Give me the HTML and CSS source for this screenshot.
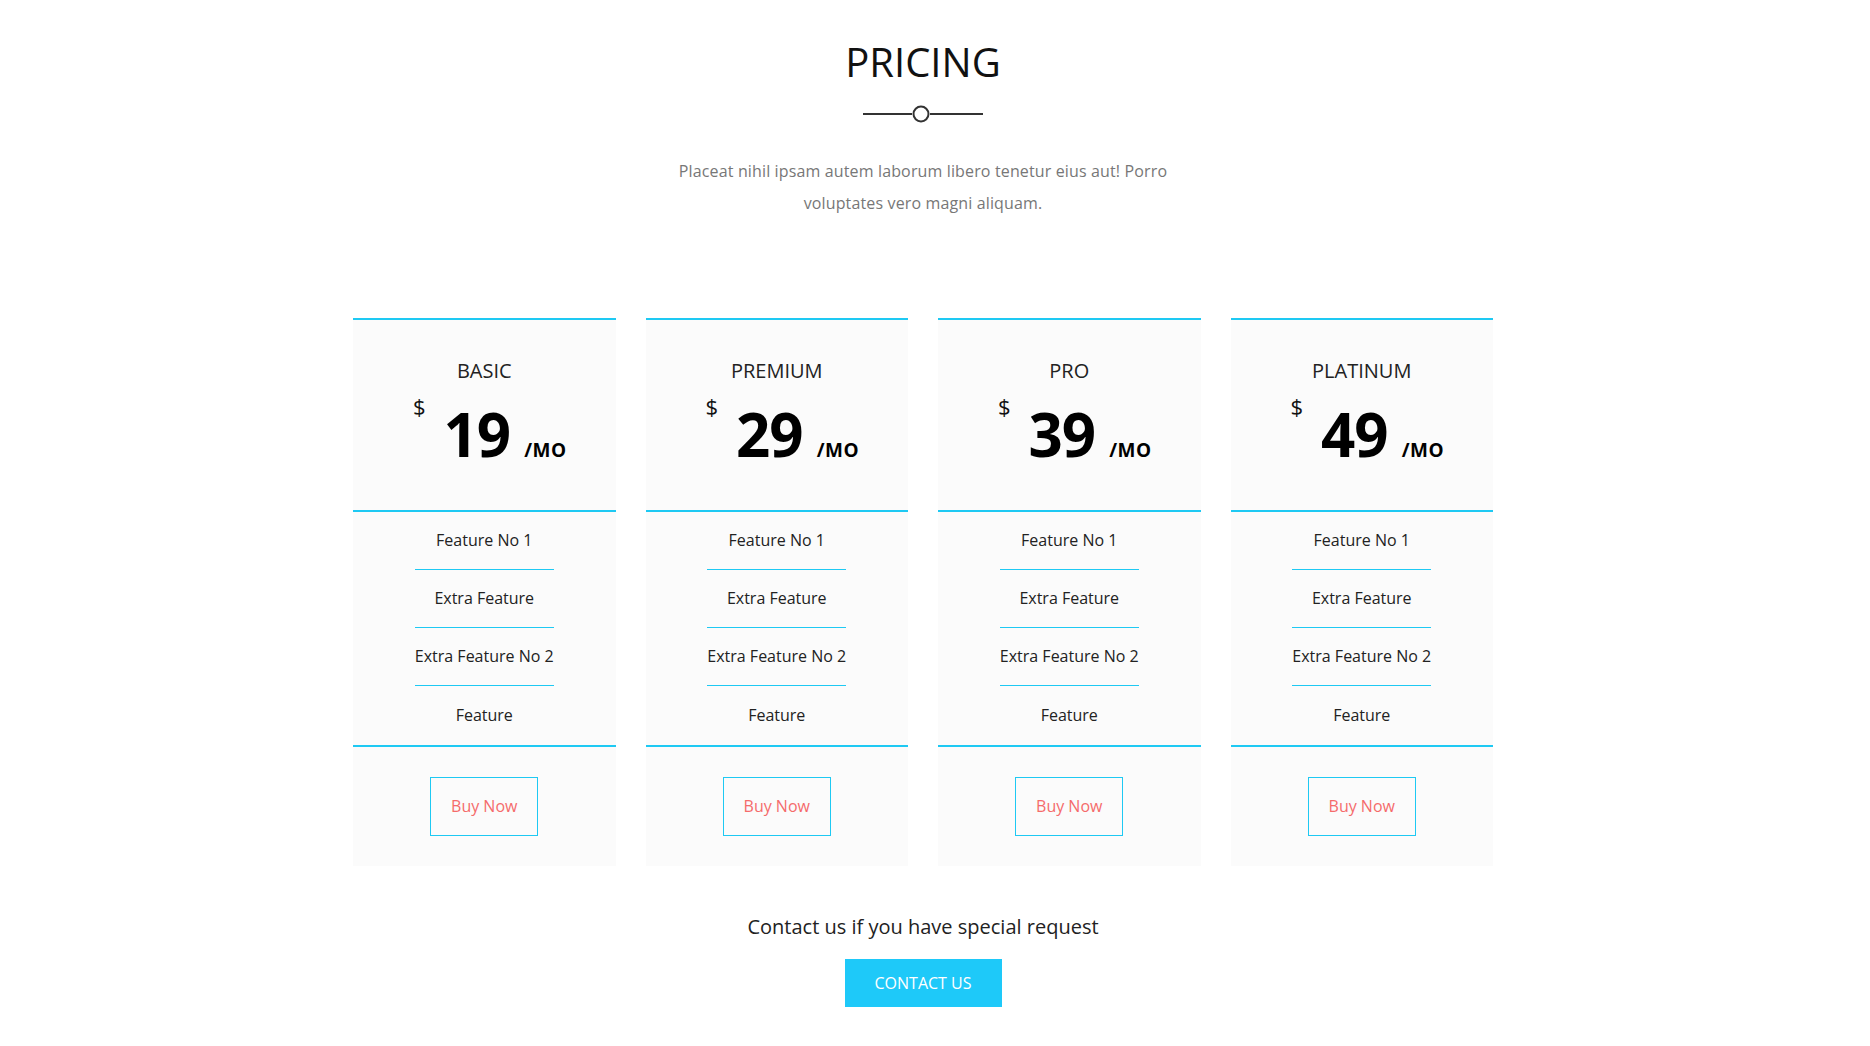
FILE: index.html
```html
<!DOCTYPE html>
<html>
<head>
<meta charset="utf-8">
<link rel="stylesheet" href="styles.css">
</head>
<body>
<section class="pricing">
  <h2 class="title">PRICING</h2>
  <div class="divider">
    <svg width="124" height="20" viewBox="0 0 124 20">
      <line x1="2" y1="10" x2="51" y2="10" stroke="#333" stroke-width="2"/>
      <circle cx="60" cy="10" r="7.5" fill="#fff" stroke="#333" stroke-width="2"/>
      <line x1="69" y1="10" x2="122" y2="10" stroke="#333" stroke-width="2"/>
    </svg>
  </div>
  <p class="lead">Placeat nihil ipsam autem laborum libero tenetur eius aut! Porro voluptates vero magni aliquam.</p>

  <div class="plans">
    <div class="plan">
      <div class="plan-head">
        <h3 class="plan-name">BASIC</h3>
        <div class="price"><span class="cur">$</span><span class="amount">19</span><span class="per">/MO</span></div>
      </div>
      <div class="plan-body">
        <ul class="features">
          <li>Feature No 1</li>
          <li>Extra Feature</li>
          <li>Extra Feature No 2</li>
          <li>Feature</li>
        </ul>
      </div>
      <div class="plan-foot"><a class="buy">Buy Now</a></div>
    </div>
    <div class="plan">
      <div class="plan-head">
        <h3 class="plan-name">PREMIUM</h3>
        <div class="price"><span class="cur">$</span><span class="amount">29</span><span class="per">/MO</span></div>
      </div>
      <div class="plan-body">
        <ul class="features">
          <li>Feature No 1</li>
          <li>Extra Feature</li>
          <li>Extra Feature No 2</li>
          <li>Feature</li>
        </ul>
      </div>
      <div class="plan-foot"><a class="buy">Buy Now</a></div>
    </div>
    <div class="plan">
      <div class="plan-head">
        <h3 class="plan-name">PRO</h3>
        <div class="price"><span class="cur">$</span><span class="amount">39</span><span class="per">/MO</span></div>
      </div>
      <div class="plan-body">
        <ul class="features">
          <li>Feature No 1</li>
          <li>Extra Feature</li>
          <li>Extra Feature No 2</li>
          <li>Feature</li>
        </ul>
      </div>
      <div class="plan-foot"><a class="buy">Buy Now</a></div>
    </div>
    <div class="plan">
      <div class="plan-head">
        <h3 class="plan-name">PLATINUM</h3>
        <div class="price"><span class="cur">$</span><span class="amount">49</span><span class="per">/MO</span></div>
      </div>
      <div class="plan-body">
        <ul class="features">
          <li>Feature No 1</li>
          <li>Extra Feature</li>
          <li>Extra Feature No 2</li>
          <li>Feature</li>
        </ul>
      </div>
      <div class="plan-foot"><a class="buy">Buy Now</a></div>
    </div>
  </div>

  <p class="contact-text">Contact us if you have special request</p>
  <a class="contact-btn">CONTACT US</a>
</section>
</body>
</html>
```

FILE: styles.css
```css
* { box-sizing: border-box; }
html, body { margin: 0; padding: 0; background: #fff; }
body {
  font-family: "Open Sans", "Liberation Sans", sans-serif;
  color: #222;
  padding-right: 24px;
}
.pricing {
  width: 1140px;
  margin: 0 auto;
  display: flex;
  flex-direction: column;
  align-items: center;
  padding-top: 40px;
}
.title {
  margin: 0;
  font-size: 40px;
  line-height: 44px;
  font-weight: 400;
  color: #111;
}
.divider {
  margin-top: 20px;
  height: 20px;
  display: flex;
  justify-content: center;
}
.divider svg { display: block; }
.lead {
  margin: 31px 0 0;
  width: 510px;
  text-align: center;
  font-size: 16px;
  line-height: 32px;
  letter-spacing: 0.14px;
  color: #777;
}
.plans {
  margin-top: 99px;
  width: 100%;
  display: flex;
  gap: 30px;
}
.plan {
  flex: 1;
  background: #fbfbfb;
  border-top: 2px solid #1ec9f3;
  text-align: center;
}
.plan-head {
  padding-top: 39px;
  height: 192px;
  border-bottom: 2px solid #1ec9f3;
}
.plan-name {
  margin: 0;
  font-size: 20px;
  line-height: 24px;
  font-weight: 400;
  color: #222;
}
.price {
  margin-top: 21px;
  height: 60px;
  line-height: 60px;
  color: #000;
  white-space: nowrap;
  padding-left: 11px;
}
.cur {
  font-size: 22px;
  line-height: 0;
  vertical-align: 42px;
  margin-right: 18px;
  color: #111;
}
.amount {
  font-size: 60px;
  font-weight: 700;
  letter-spacing: -1px;
}
.per {
  font-size: 19px;
  line-height: 0;
  font-weight: 700;
  letter-spacing: 0.5px;
  margin-left: 14px;
}
.plan-body {
  border-bottom: 2px solid #1ec9f3;
}
.features {
  list-style: none;
  margin: 0 auto;
  padding: 0;
  width: max-content;
}
.features li {
  height: 58px;
  line-height: 57px;
  border-bottom: 1px solid #1ec9f3;
  font-size: 16px;
  color: #222;
}
.features li:last-child {
  border-bottom: 0;
  height: 59px;
  line-height: 59px;
}
.plan-foot {
  padding: 30px 0 30px;
  display: flex;
  justify-content: center;
}
.buy {
  display: block;
  width: 108px;
  height: 59px;
  line-height: 57px;
  border: 1px solid #1ec9f3;
  color: #f56b6b;
  font-size: 16px;
  text-decoration: none;
}
.contact-text {
  margin: 47px 0 0;
  font-size: 20px;
  line-height: 28px;
  color: #222;
}
.contact-btn {
  display: block;
  margin-top: 18px;
  width: 157px;
  height: 48px;
  line-height: 48px;
  text-align: center;
  background: #1ec9f9;
  color: #fff;
  font-size: 16px;
  text-decoration: none;
}
```
